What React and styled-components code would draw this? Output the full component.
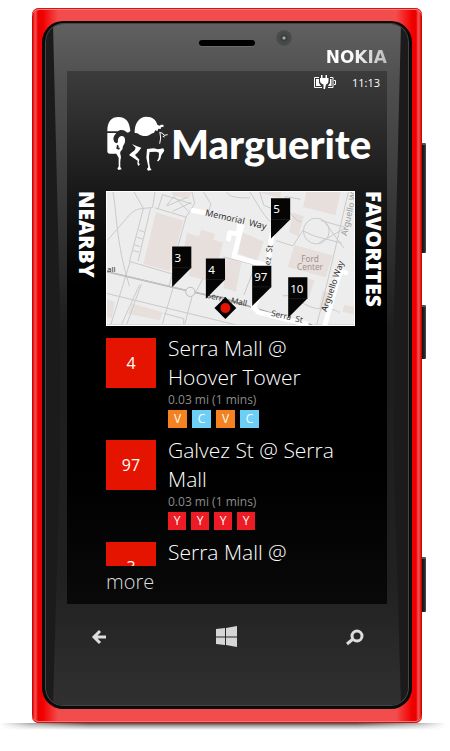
import React from "react";
import styled, { createGlobalStyle } from "styled-components";

const Global = createGlobalStyle`
  * { box-sizing: border-box; }
  body { margin: 0; background: #fff; font-family: "Open Sans", "Noto Sans", sans-serif; }
  button { border: 0; margin: 0; padding: 0; background: none; color: inherit; font: inherit; cursor: pointer; }
`;

const Page = styled.main`
  padding: 8px 24px 0 32px;
`;

const Device = styled.div`
  display: flex;
  align-items: stretch;
`;

const Shell = styled.div`
  flex: 1;
  min-width: 0;
  padding: 13px 10px 14px 10px;
  border-radius: 7px;
  background: linear-gradient(to right, #b80000 0, #e00c0c 1px, #f74c4c 3px, #f74040 4px, #e80000 6px, #f20000 11px, #f34c4c 26px,
    #f34c4c calc(100% - 26px), #f20000 calc(100% - 10px), #e80000 calc(100% - 6px), #f74848 calc(100% - 4px), #f74c4c calc(100% - 3px), #e00c0c calc(100% - 1px), #b80000 100%);
  box-shadow: inset 0 1px 0 #d91414, inset 0 2px 0 #ff8080, inset 0 -1px 0 #c41414, inset 0 -2px 0 #ff7070;
`;

const Glass = styled.div`
  border-radius: 21px;
  padding: 0 22px;
  border: 2px solid #0b0b0b;
  border-width: 2px 3px 3px;
  background: #1b1b1b;
  box-shadow: inset 0 0 0 1px #454545;
  position: relative;
  isolation: isolate;
  &::before {
    content: "";
    position: absolute;
    z-index: -1;
    inset: 1px;
    border-radius: 18px;
    background: linear-gradient(#606060, #505050 8%, #2c2c2c 35%, #1d1d1d 45%, #212121 82%, #303030);
    clip-path: polygon(7px 0, calc(100% - 7px) 0, calc(100% - 14px) 42%, calc(100% - 14px) 65%, calc(100% - 7px) 100%, 7px 100%, 14px 65%, 14px 42%);
  }
`;

const Top = styled.header`
  height: 48px;
  display: grid;
  grid-template-columns: 1fr 56px 1fr;
`;

const Speaker = styled.div`
  grid-column: 2;
  margin-top: 17px;
  height: 6px;
  border-radius: 3px;
  background: #000;
  box-shadow: 0 1px 0 #6a6a6a;
`;

const TopRight = styled.div`
  display: flex;
  justify-content: space-between;
  padding-left: 21px;
`;

const Camera = styled.div`
  width: 16px;
  height: 16px;
  margin-top: 7px;
  border-radius: 50%;
  background: radial-gradient(circle, #9ab 0 1px, #4d4048 2px, #2f3f38 3px, #484848 4px 6px, #505050 8px);
`;

const Brand = styled.div`
  align-self: flex-end;
  margin-bottom: 4px;
  font: bold 17px/20px "DejaVu Sans", sans-serif;
  background: linear-gradient(to right, #fff, #fff 40%, #bcbcbc);
  background-clip: text;
  color: transparent;
`;

const Screen = styled.section`
  color: #fff;
  background: linear-gradient(#3c3c3c, #1b1b1b 21%, #000 40%, #000 75%, #090909);
`;

const StatusBar = styled.div`
  display: flex;
  justify-content: flex-end;
  align-items: center;
  gap: 16px;
  height: 22px;
  padding: 0 7px 0 0;
  font-size: 11px;
`;

const Logo = styled.h1`
  display: flex;
  align-items: center;
  gap: 1px;
  margin: 21px 0 0;
  padding-left: 38px;
  height: 60px;
  font: 900 40px/60px Lato, sans-serif;
`;

const Columns = styled.div`
  display: grid;
  grid-template-columns: 39px minmax(0, 1fr) 32px;
  align-items: start;
  padding-top: 17px;
`;

const SideTab = styled.button`
  justify-self: ${(p) => (p.$edge ? "end" : "center")};
  writing-mode: vertical-rl;
  && { font: 900 21px/26px "Noto Sans", sans-serif; }
`;

const MapView = styled.svg`
  display: block;
  width: 100%;
  border: 1px solid #fff;
`;

const Stops = styled.ul`
  list-style: none;
  margin: 8px 0 0;
  padding: 0;
  max-height: 232px;
  overflow: hidden;
`;

const Stop = styled.li`
  display: grid;
  grid-template-columns: 50px minmax(0, 1fr);
  column-gap: 12px;
  align-items: start;
  padding-bottom: 8px;
`;

const Tile = styled.div`
  height: 50px;
  margin-top: 4px;
  display: grid;
  place-items: center;
  background: #e51400;
  font-size: 16px;
`;

const StopName = styled.h2`
  margin: 0;
  font-weight: 300;
  font-size: 21px;
  line-height: 29px;
`;

const Distance = styled.p`
  margin: 0 0 3px;
  color: #8c8c8c;
  font-size: 12px;
  line-height: 15px;
`;

const Lines = styled.div`
  display: flex;
  gap: 5px;
`;

const LineBadge = styled.span`
  width: ${(p) => (p.$tone === "#ed1c24" ? 18 : 19)}px;
  height: 18px;
  display: grid;
  place-items: center;
  background: ${(p) => p.$tone};
  font-size: 12px;
  line-height: 18px;
`;

const More = styled.a`
  display: block;
  color: #ddd;
  text-decoration: none;
  font-weight: 300;
  font-size: 20px;
  line-height: 32px;
  padding-bottom: 6px;
`;

const Keys = styled.nav`
  height: 102px;
  padding: 22px 21px 0;
  display: flex;
  justify-content: space-between;
  align-items: flex-start;
`;

const Key = styled.button`
  width: 22px;
  height: 22px;
  svg { display: block; }
`;

const Rail = styled.div`
  width: 4px;
  padding-top: 135px;
`;

const SideKey = styled.div`
  height: ${(p) => p.$size}px;
  margin-bottom: ${(p) => p.$after}px;
  border-radius: 0 1px 1px 0;
  border-top: 2px solid #555;
  background: linear-gradient(to right, #111, #2c2c2c 70%, #555);
`;

const Ground = styled.div`
  height: 7px;
  margin: 0 -20px 0 -32px;
  background: linear-gradient(to right, transparent, rgba(0, 0, 0, 0.5) 7%, #000 20%, #000 80%, rgba(0, 0, 0, 0.5) 93%, transparent);
  mask-image: linear-gradient(rgba(0, 0, 0, 0.7), rgba(0, 0, 0, 0.35) 40%, transparent);
`;

const Horse = () => (
  <svg width="65" height="56" viewBox="27 26 195 168" fill="#fff" aria-hidden="true">
    <path d="M34 72C34 42 46 29 67 29c24 0 34 16 36 42-5 5-8 6-12 3-6-8-18-8-26-2z" />
    <path d="M34 77h27c-9 8-11 19-6 27 5 5 9 4 11 0-2-10 4-18 12-18 7 0 10 7 9 15 0 10-6 12-7 20 0 5-3 8-6 10 0 4-3 6-1 8l2 11c-3 10-2 22-2 29l4 7-10 2-3-5 4-5V151l-7-12H42c-6 0-8-3-8-8z" />
    <path d="M63 112l6 4-3 4 6 2-3 5-8-3z" fill="#222" />
    <path d="M116 77c-1-28 13-49 35-49 19 0 29 9 33 24l7 3 4-3 7 0 1 6-8 2-1 5-7-1-3 7-6-2-4 7-8 3c-10 9-24 9-35 3-6-4-9-5-15-5z" />
    <path d="M190 75l10 3 4 6 11-2M192 77l2 15-3 17M200 87l6 2" fill="none" stroke="#fff" strokeWidth="3" />
    <path d="M108 110l13 6 15 5-10 14-9 8 13 14-2 9 4 5-5 5-3-7 1-9-26-17 9-8 8-6 3-8z" />
    <path d="M153 125l20-2 13 3 16-3 3 7-9 13-3 12-6 7-4-1 5-10 1-15-8-3-20 1-2 13 1 22 3 14 4 5-11 2-3-5 4-6-6-28z" />
  </svg>
);

const Battery = () => (
  <svg width="22" height="14" viewBox="0 0 22 14" aria-label="Charging">
    <path d="M5 2.500H.5v10H8M14 12.500h5v-10h-3M20 5.500h1.500v4H20" fill="none" stroke="#fff" strokeWidth="1" />
    <path d="M2 4h3v4l2 3H2zM16 4h1.500v7H14l2-3z" fill="#fff" />
    <path d="M7 0h1.500v3h3V0H13v3h1.500v3c0 2-1 3-2.500 3.500L11 14H9.500V9.500C8 9 6 8 6 6V3h1z" fill="#fff" />
  </svg>
);

const pins = [
  ["3", 305, 183],
  ["4", 407, 219],
  ["5", 604, 37],
  ["97", 547, 241],
  ["10", 656, 276],
];

const CampusMap = () => (
  <MapView viewBox="108 18 747 402" role="img" aria-label="Map of nearby stops" fontFamily="Noto Sans, sans-serif">
    <rect x="108" y="18" width="747" height="402" fill="#ededed" />
    <g fill="#e6dfdc">
      <path d="M256 79l83 26-41 153-80-22zM305 18h57l-6 22-51-12zM350 141l36 12 8-21 40 13-4 17 29 9-14 52-22 10-14 52-56-14 8-21-30-11z" />
      <path d="M184 355l92 27-8 24-96-20zM108 342l23 8-8 50-15-4zM470 220l44 12-16 88-38-12zM516 140l66 28-20 58-57-22zM572 18h62l-2 18-56-14zM711 18h103l-15 70-98-25zM671 80l32 12-16 60-28-12zM675 178l115 32-21 66-114-31zM700 275l36 10-18 52-32-8zM760 318l24 6-12 50-22-6zM825 360l30 6v22l-34-8z" />
    </g>
    <g fill="none" stroke="#c9c9c9" strokeWidth="3">
      <path d="M126 18c12 60 8 150 50 285M108 165l58-66c26-34 40-30 80-34l7-47M190 18l28 50-42 160M240 67l-38 160M253 66l94 28-40 145M276 26l88 28M276 26l-14 45M365 18l8 35-26 41M288 60l22-29 44 45M290 60l60-26M362 50l-55 26M176 228l130 38-10 36M205 133l17 7M198 155l17 5M191 178l17 5M187 195l17 5M400 18l22 36-8 30M470 18c8 16 30 18 70 18" />
      <path d="M178 228l-58 190M206 300l-54 118M108 325l390 95M212 296l-44 122M325 250l-50 168M365 335l-22 83M398 280l-24 45M280 385l60 16v18M460 215l90 22M540 18c20 30 40 70 62 90M570 18l12 40 50 20 16-46 45 8M620 165l50 16 30-46 35 16 84 22M764 105l60 82M832 125l-82 46M838 18c-24 100-54 240-96 402M755 104l70 20M640 332c40-8 60 40 120 40s40 14 52 8" />
      <circle cx="741" cy="136" r="39" />
      <path d="M636 72c36 2 34 34 60 36M560 230l-38 100" />
    </g>
    <path d="M108 259l250 59 110 24 160 50 100 28" fill="none" stroke="#a6a6a6" strokeWidth="5" />
    <path d="M108 259l250 59 110 24" fill="none" stroke="#d8d8d8" strokeWidth="2" />
    <circle cx="360" cy="320" r="14" fill="#ededed" stroke="#bbb" strokeWidth="3" />
    <g fill="none" stroke="#fff" strokeWidth="15" strokeLinecap="round" strokeLinejoin="round">
      <path d="M368 74l32 6M476 160l3-19 18 3M516 120l-24 93 98 28M510 110l-4 30M607 145l-18 140-38 82 16 15 143 36M810 254l20 8M813 258l-46 162" />
    </g>
    <g fill="#333" fontSize="27">
      <text transform="translate(404 89) rotate(13)">Memorial&#160; Way</text>
      <text transform="translate(601 240) rotate(-82)" fontSize="25">ez&#160; St</text>
      <text transform="translate(408 338) rotate(12)" fontSize="25">Serra&#160; Mall</text>
      <text transform="translate(603 392) rotate(13)" fontSize="25">Serra&#160; St</text>
      <text transform="translate(772 382) rotate(-71)" fontSize="26">Arguello&#160;Way</text>
      <text transform="translate(833 152) rotate(-77)" fill="#999" fontSize="26">Arguello&#160;Way</text>
      <text x="108" y="260" fontSize="24">all</text>
      <g fill="#a3928a" fontSize="25" textAnchor="middle">
        <text x="722" y="229">Ford</text>
        <text x="722" y="254">Center</text>
      </g>
    </g>
    {pins.map(([label, x, y]) => (
      <g key={label}>
        <path d={`M${x} ${y}h58v64l-58 58z`} fill="#050505" />
        <path d={`M${x} ${y + 64}h58`} stroke="#262626" strokeWidth="2" />
        <text x={x + (label.length > 1 ? 26 : 17)} y={y + 46} fill="#fff" fontSize="35" textAnchor="middle">
          {label}
        </text>
      </g>
    ))}
    <path d="M466 336l33 33-33 33-33-33z" fill="#000" />
    <circle cx="466" cy="369" r="15" fill="#e51400" />
  </MapView>
);

const orange = "#f58220";
const blue = "#6dcff6";
const red = "#ed1c24";

const stops = [
  { id: "4", name: "Serra Mall @ Hoover Tower", lines: [["V", orange], ["C", blue], ["V", orange], ["C", blue]] },
  { id: "97", name: "Galvez St @ Serra Mall", lines: [["Y", red], ["Y", red], ["Y", red], ["Y", red]] },
  { id: "3", name: "Serra Mall @", lines: [] },
];

export default function App() {
  return (
    <Page>
      <Global />
      <Device>
        <Shell>
          <Glass>
            <Top>
              <Speaker />
              <TopRight>
                <Camera />
                <Brand>NOKIA</Brand>
              </TopRight>
            </Top>
            <Screen>
              <StatusBar>
                <Battery />
                <time>11:13</time>
              </StatusBar>
              <Logo>
                <Horse />
                Marguerite
              </Logo>
              <Columns>
                <SideTab type="button">NEARBY</SideTab>
                <div>
                  <CampusMap />
                  <Stops>
                    {stops.map((stop) => (
                      <Stop key={stop.id}>
                        <Tile>{stop.id}</Tile>
                        <div>
                          <StopName>{stop.name}</StopName>
                          {stop.lines.length > 0 && (
                            <>
                              <Distance>0.03 mi (1 mins)</Distance>
                              <Lines>
                                {stop.lines.map(([letter, tone], i) => (
                                  <LineBadge key={i} $tone={tone}>{letter}</LineBadge>
                                ))}
                              </Lines>
                            </>
                          )}
                        </div>
                      </Stop>
                    ))}
                  </Stops>
                  <More href="#more">more</More>
                </div>
                <SideTab type="button" $edge>FAVORITES</SideTab>
              </Columns>
            </Screen>
            <Keys>
              <Key type="button" aria-label="Back">
                <svg width="22" height="22" viewBox="0 0 22 22">
                  <path d="M18 11H6M12 5l-6 6 6 6" fill="none" stroke="#ddd" strokeWidth="3" />
                </svg>
              </Key>
              <Key type="button" aria-label="Start">
                <svg width="22" height="22" viewBox="0 0 22 22">
                  <path d="M0 3l9-1v8.500H0zM10 2l11-2v10.500H10zM0 11.500h9V19l-9-1zM10 11.500h11V21l-11-2z" fill="#d6d6d6" />
                </svg>
              </Key>
              <Key type="button" aria-label="Search">
                <svg width="22" height="22" viewBox="0 0 22 22" fill="none" stroke="#ddd" strokeWidth="3">
                  <circle cx="13" cy="10" r="5" />
                  <path d="M9 13l-6 5" />
                </svg>
              </Key>
            </Keys>
          </Glass>
        </Shell>
        <Rail>
          <SideKey $size={110} $after={52} />
          <SideKey $size={54} $after={198} />
          <SideKey $size={55} $after={0} />
        </Rail>
      </Device>
      <Ground />
    </Page>
  );
}
